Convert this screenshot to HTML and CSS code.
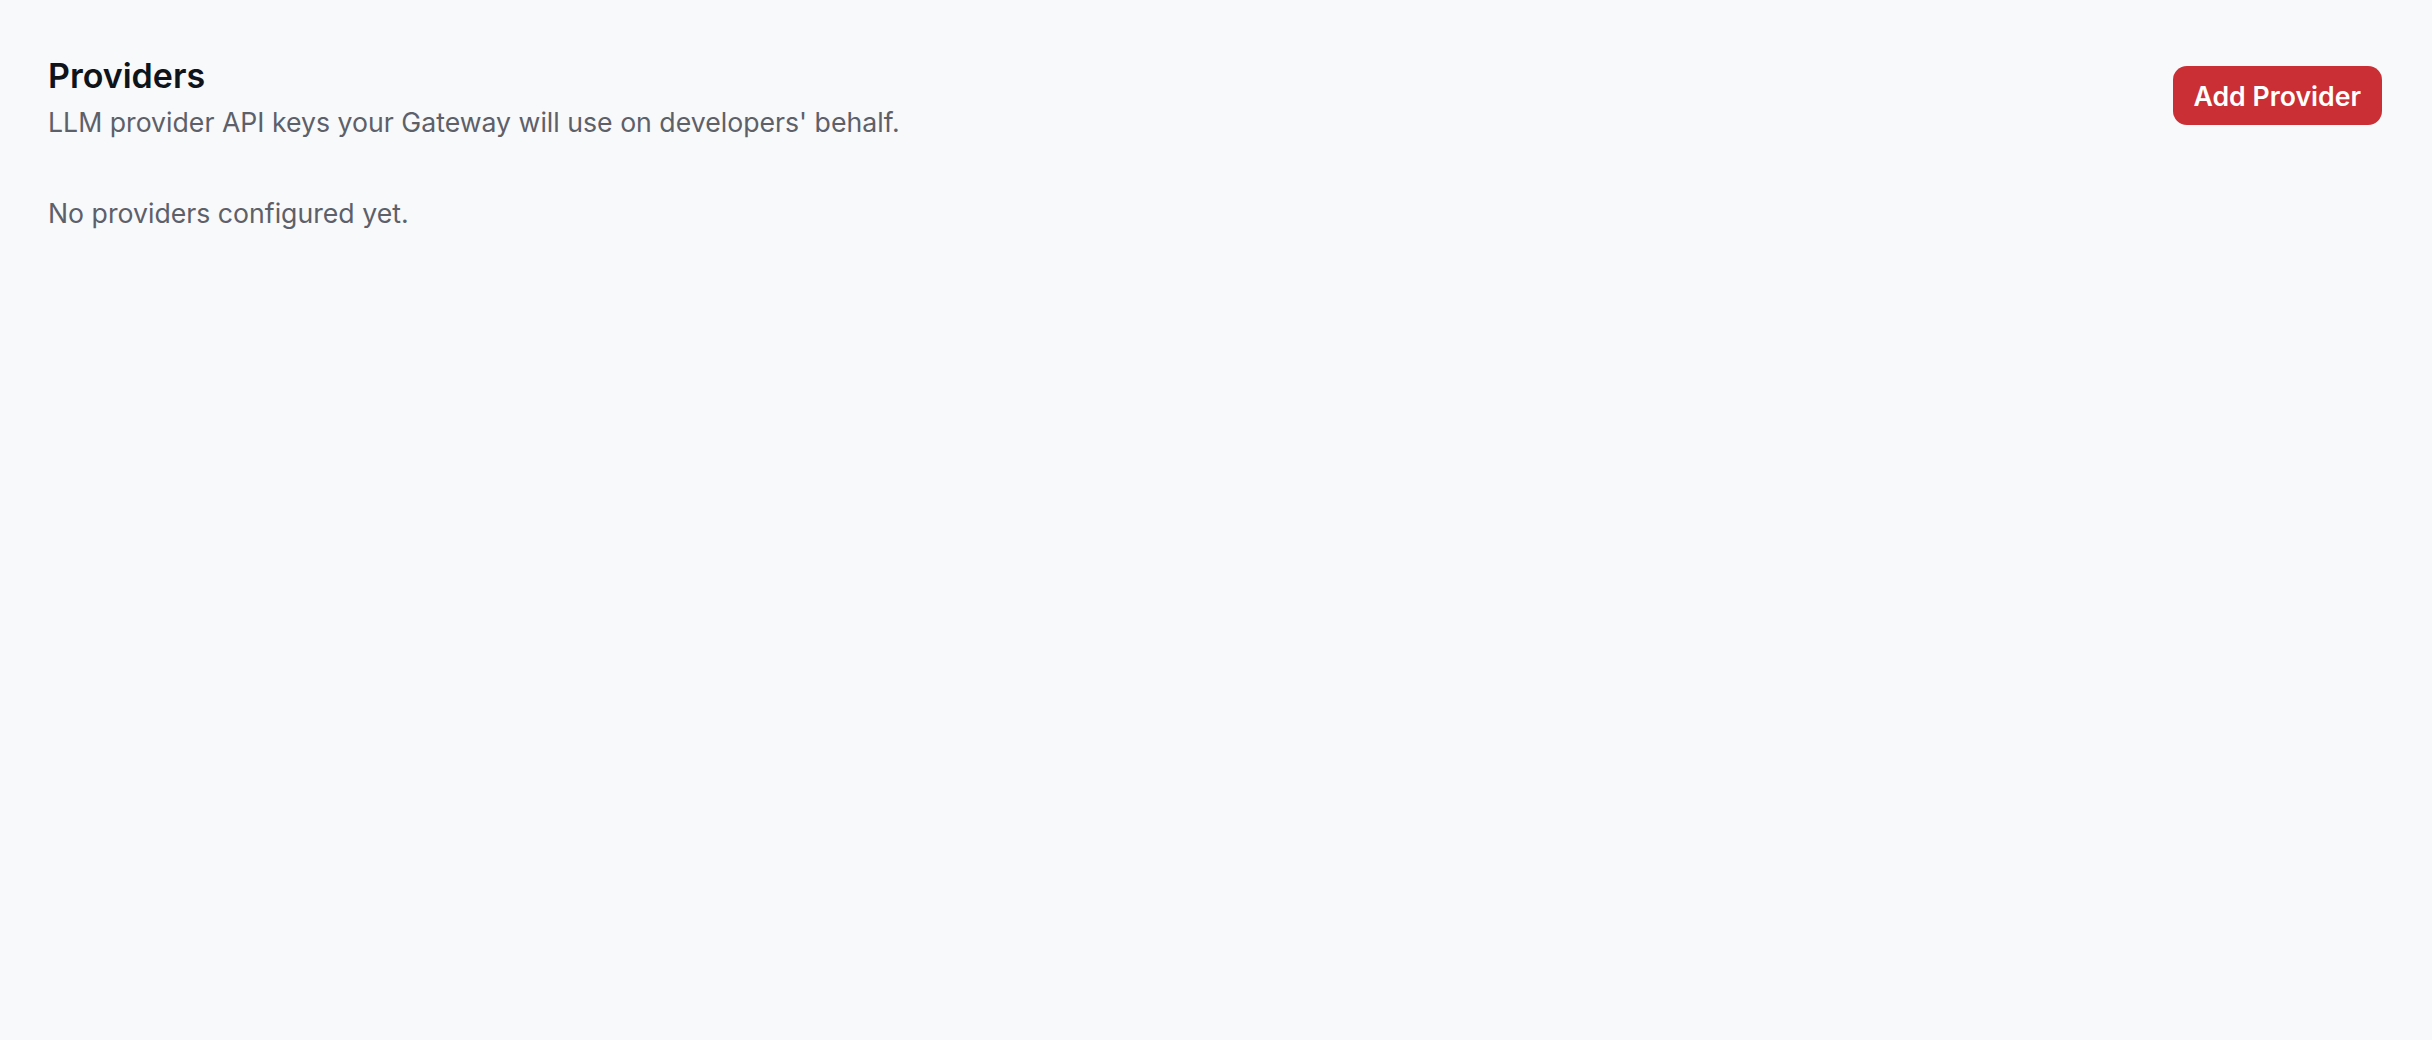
FILE: index.html
```html
<!DOCTYPE html>
<html lang="en">
<head>
<meta charset="utf-8">
<title>Providers</title>
<link rel="stylesheet" href="styles.css">
</head>
<body>
<main class="page">
  <header class="page-header">
    <div class="heading">
      <h1 class="title">Providers</h1>
      <p class="subtitle">LLM provider API keys your Gateway will use on developers' behalf.</p>
    </div>
    <button class="btn-primary" type="button">Add Provider</button>
  </header>
  <p class="empty">No providers configured yet.</p>
</main>
</body>
</html>
```
FILE: styles.css
```css
html, body {
  margin: 0;
  padding: 0;
  background: #f8f9fa;
  height: 100%;
}
body {
  font-family: Inter, "Noto Sans", "Liberation Sans", sans-serif;
  color: #111827;
}
.page {
  padding: 56px 50px 48px 48px;
}
.page-header {
  display: flex;
  justify-content: space-between;
  align-items: flex-start;
}
.heading {
  display: flex;
  flex-direction: column;
  gap: 6px;
}
.title {
  margin: 0;
  font-size: 34px;
  line-height: 40px;
  font-weight: 600;
  color: #0f131a;
}
.subtitle {
  margin: 0;
  font-size: 26.67px;
  line-height: 40px;
  font-weight: 400;
  color: #5d6069;
}
.btn-primary {
  margin-top: 10px;
  font-family: inherit;
  font-size: 26.67px;
  font-weight: 600;
  line-height: 32px;
  color: #ffffff;
  background: #c92f35;
  border: none;
  border-radius: 14px;
  height: 59px;
  padding: 0 21px;
  cursor: pointer;
}
.empty {
  margin: 51px 0 0;
  font-size: 26.67px;
  line-height: 40px;
  color: #5d6069;
}
```
